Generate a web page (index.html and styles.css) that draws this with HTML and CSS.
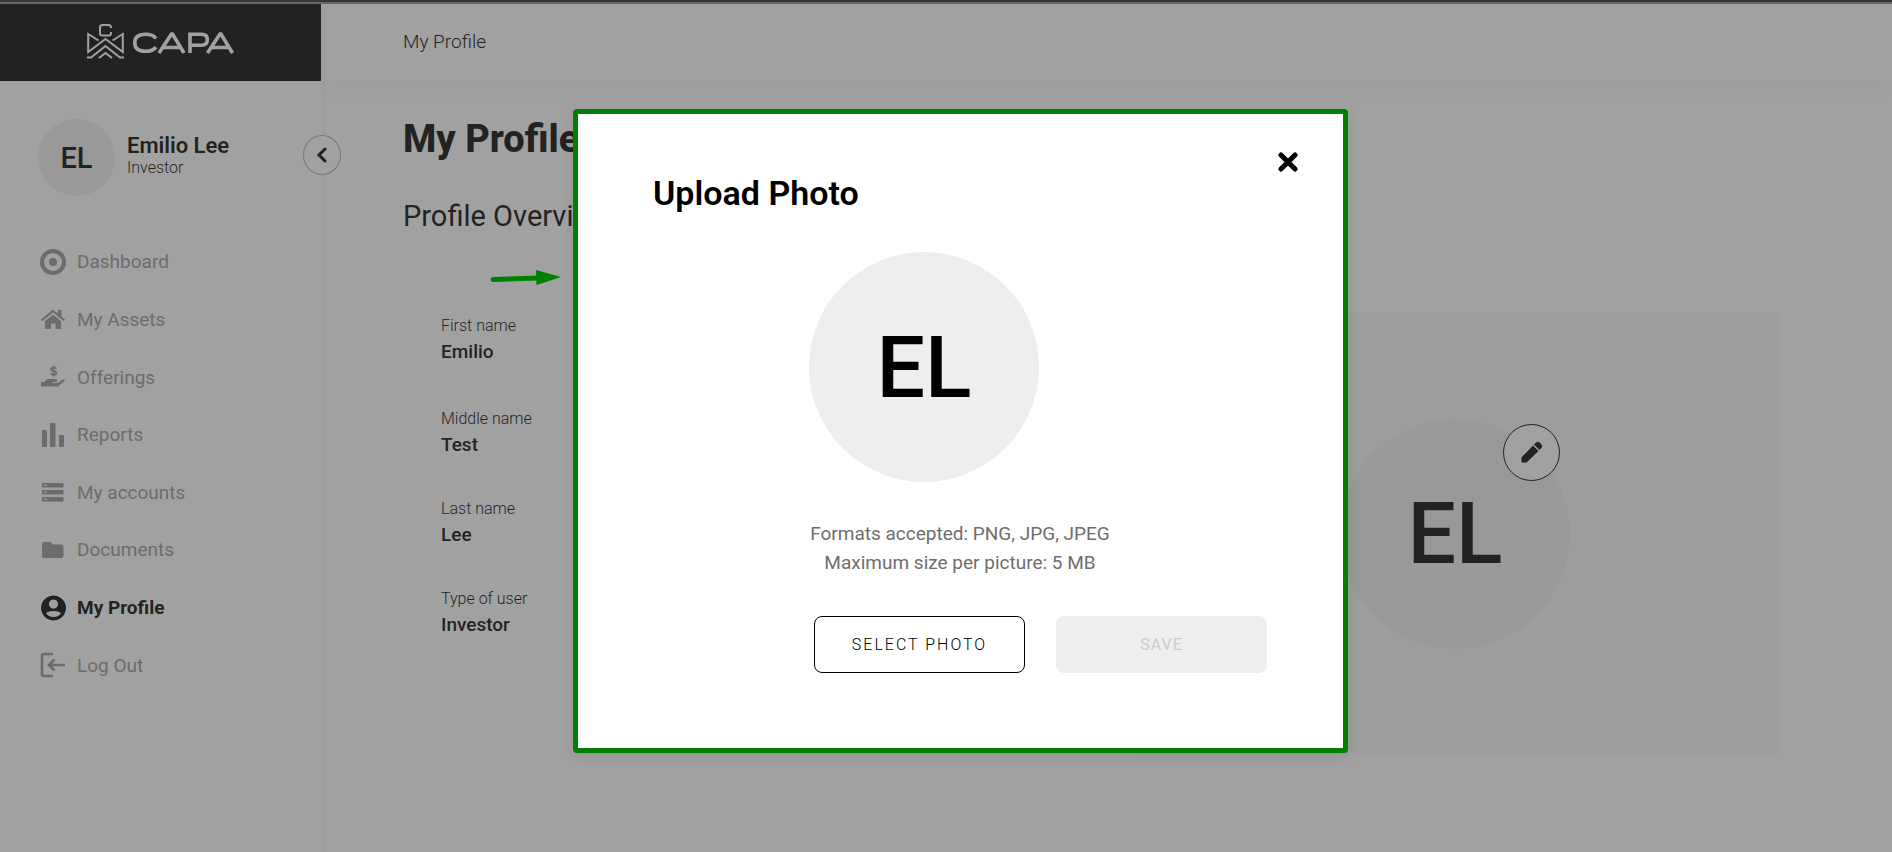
FILE: index.html
```
<!DOCTYPE html>
<html lang="en">
<head>
<meta charset="utf-8">
<title>My Profile</title>
<link rel="stylesheet" href="styles.css">
</head>
<body>
<div class="app">
  <aside class="sidebar">
    <div class="brand">
      <svg class="logo" viewBox="0 0 148 36" width="148" height="36" role="img" aria-label="CAPA">
        <g fill="none" stroke="#fff" stroke-width="2">
          <path d="M24 4V3.500Q24 1 21.500 1H15.500Q13 1 13 3.500V9Q13 11.500 15.500 11.500H21.500Q24 11.500 24 9V8"/>
          <path d="M11.500 16.500L1.200 10V28L18.500 15L35.800 28V10L25.500 16.500"/>
          <path d="M0 33.500H4L18.500 22L33 33.500H37"/>
          <path d="M12 34L18.500 29L25 34"/>
        </g>
        <g fill="none" stroke="#fff" stroke-width="3.600">
          <path d="M69 14.500Q66 10.300 58.500 10.300C51.500 10.300 47.800 13.500 47.800 18.800S51.500 27.300 58.500 27.300Q66 27.300 69 23.100"/>
          <path d="M72 29L84.500 10H85.500L97 29M76.500 23.500H93"/>
          <path d="M103 29V10.300H114.500Q120.300 10.300 120.300 15.800T114.500 21.300H103"/>
          <path d="M120.500 29L133 10H134L145.500 29M125 23.500H141.500"/>
        </g>
      </svg>
    </div>
    <div class="user">
      <div class="avatar avatar-small">EL</div>
      <div class="user-text">
        <div class="user-name">Emilio Lee</div>
        <div class="user-role">Investor</div>
      </div>
      <button class="collapse" aria-label="Collapse menu">
        <svg viewBox="0 0 14 18" width="14" height="18"><path d="M10 3L4 9l6 6" fill="none" stroke="#000" stroke-width="3" stroke-linecap="round"/></svg>
      </button>
    </div>
    <nav class="nav">
      <a class="nav-item" href="#"><svg class="icon" viewBox="0 0 26 26"><circle cx="13" cy="13" r="11" fill="none" stroke="currentColor" stroke-width="4"/><circle cx="13" cy="13" r="4"/></svg>Dashboard</a>
      <a class="nav-item" href="#"><svg class="icon" viewBox="0 0 26 26"><path d="M13 8.500L21 15V23H15.500V17.500H11V23H5V15Z"/><path d="M1.500 14.500L13 5L24.500 14.500" fill="none" stroke="currentColor" stroke-width="2.200"/><path d="M18 4H21.500V11L18 8Z"/></svg>My Assets</a>
      <a class="nav-item" href="#"><svg class="icon" viewBox="0 0 26 26"><path d="M1 18H4L7.500 15H16Q17.500 15 17.500 16.500T16 18H12.500V19H18L23 15.200Q25.500 15 24.500 17L18 22.500H1Z"/><path d="M16.500 4.500Q15.500 3.500 13.500 3.500Q11 3.500 11 5.300Q11 6.700 13.700 7T16.400 9Q16.400 10.700 13.700 10.700Q11.500 10.700 10.500 9.500M13.600 1.500V12.500" fill="none" stroke="currentColor" stroke-width="1.700"/></svg>Offerings</a>
      <a class="nav-item" href="#"><svg class="icon" viewBox="0 0 26 26"><rect x="2" y="8" width="5" height="17" rx="1"/><rect x="10" y="1" width="5.500" height="24" rx="1"/><rect x="19" y="13" width="5" height="12" rx="1"/></svg>Reports</a>
      <a class="nav-item" href="#"><svg class="icon" viewBox="0 0 26 26"><path fill-rule="evenodd" d="M2 4H23.500V8.500H2ZM4.500 5.500V7H6.500V5.500ZM2 11H23.500V15.500H2ZM4.500 12.500V14H6.500V12.500ZM2 18H23.500V22.500H2ZM4.500 19.500V21H6.500V19.500Z"/></svg>My accounts</a>
      <a class="nav-item" href="#"><svg class="icon" viewBox="0 0 26 26"><path d="M4 5H10.500L13 7.500H21.500Q23.500 7.500 23.500 9.500V19Q23.500 21 21.500 21H4Q2 21 2 19V7Q2 5 4 5Z"/></svg>Documents</a>
      <a class="nav-item nav-item-active" href="#" aria-current="page"><svg class="icon" viewBox="0 0 26 26"><path fill-rule="evenodd" d="M13.500 .5a12.500 12.500 0 1 0 .01 0ZM13.500 4.500a4.500 4.500 0 1 1-.01 0ZM13.500 22Q9 22 6 18.500Q7.500 16 13.500 16T21 18.500Q18 22 13.500 22Z"/></svg>My Profile</a>
      <a class="nav-item" href="#"><svg class="icon" viewBox="0 0 26 26"><path d="M13 2H4Q2 2 2 4V22Q2 24 4 24H13M25 13H9M14.500 7.500L9 13L14.500 18.500" fill="none" stroke="currentColor" stroke-width="2.700"/></svg>Log Out</a>
    </nav>
  </aside>
  <div class="content">
    <header class="topbar">My Profile</header>
    <main class="page">
      <h1 class="page-title">My Profile</h1>
      <h2 class="section-title">Profile Overview</h2>
      <div class="overview">
        <dl class="fields">
          <div class="field"><dt>First name</dt><dd>Emilio</dd></div>
          <div class="field"><dt>Middle name</dt><dd>Test</dd></div>
          <div class="field"><dt>Last name</dt><dd>Lee</dd></div>
          <div class="field"><dt>Type of user</dt><dd>Investor</dd></div>
        </dl>
        <section class="photo-panel">
          <div class="photo">
            <div class="avatar avatar-large">EL</div>
            <button class="edit" aria-label="Edit photo">
              <svg viewBox="0 0 22 22" width="22" height="22"><path d="M.5 21.500V16.500L12 4.500L17.500 10L5.500 21.500ZM13 3.500L15.500 1.300Q17 .3 18.300 1.300L20.700 3.700Q21.700 5 20.700 6.500L18.500 9Z"/></svg>
            </button>
          </div>
        </section>
      </div>
    </main>
  </div>
</div>
<div class="backdrop">
  <svg class="pointer" viewBox="0 0 72 18" width="72" height="18" aria-hidden="true"><path d="M3 10.500L48 9" stroke="#008000" stroke-width="5" stroke-linecap="round"/><path d="M46 1L71 8L46.500 16Z" fill="#008000"/></svg>
  <div class="modal" role="dialog" aria-modal="true" aria-labelledby="modal-title">
    <button class="close" aria-label="Close">
      <svg viewBox="0 0 20 20" width="20" height="20"><path d="M3 3L17 17M17 3L3 17" stroke="#000" stroke-width="5" stroke-linecap="round"/></svg>
    </button>
    <h2 class="modal-title" id="modal-title">Upload Photo</h2>
    <div class="modal-body">
      <div class="avatar avatar-large">EL</div>
      <p class="hint">Formats accepted: PNG, JPG, JPEG<br>Maximum size per picture: 5 MB</p>
      <div class="actions">
        <button class="button">SELECT PHOTO</button>
        <button class="button button-disabled" disabled>SAVE</button>
      </div>
    </div>
  </div>
</div>
<div class="window-edge"></div>
</body>
</html>
```

FILE: styles.css
```
* { box-sizing: border-box; }
body {
  margin: 0;
  font-family: Roboto, "Liberation Sans", sans-serif;
  color: #000;
  background: #fff;
}
button { font: inherit; color: inherit; padding: 0; cursor: pointer; }
.app {
  display: flex;
  min-height: 100vh;
  padding-top: 4px;
}
.window-edge {
  position: absolute;
  top: 0;
  left: 0;
  right: 0;
  z-index: 3;
  height: 4px;
  background: #35353d;
  border-bottom: 2px solid #66666a;
}
.sidebar {
  position: relative;
  z-index: 1;
  flex: none;
  width: 326px;
  border-right: 4px solid #f6f6f6;
  background: #fff;
}
.brand {
  display: flex;
  align-items: center;
  justify-content: center;
  height: 77px;
  margin-right: 1px;
  padding-bottom: 2px;
  background: #000;
}
.user {
  position: relative;
  display: flex;
  align-items: center;
  gap: 12px;
  margin-top: 38px;
  padding-left: 38px;
}
.avatar {
  display: flex;
  align-items: center;
  justify-content: center;
  border-radius: 50%;
  background: #eee;
  font-weight: 500;
}
.avatar-small { width: 77px; height: 77px; font-size: 29px; }
.avatar-large { width: 230px; height: 230px; font-size: 86px; }
.user-text { padding-bottom: 6px; }
.user-name { font-size: 22px; line-height: 26px; font-weight: 600; }
.user-role { font-size: 16px; line-height: 18px; font-weight: 300; }
.collapse {
  position: absolute;
  right: -19px;
  top: 16px;
  display: flex;
  align-items: center;
  justify-content: center;
  width: 38px;
  height: 40px;
  border: 1px solid #aaa;
  border-radius: 50%;
  background: #fff;
}
.nav {
  display: grid;
  grid-auto-rows: 1fr;
  height: 461px;
  margin-top: 37px;
  padding-left: 40px;
}
.nav-item {
  display: flex;
  align-items: center;
  gap: 11px;
  font-size: 19px;
  color: #949494;
  text-decoration: none;
}
.icon { width: 26px; height: 26px; fill: currentColor; }
.nav-item-active { color: #000; font-weight: 700; }
.content { flex: 1; min-width: 0; }
.topbar {
  height: 77px;
  padding-left: 77px;
  line-height: 75px;
  font-size: 19px;
  font-weight: 300;
  box-shadow: 0 10px 18px #f6f6f6;
}
.page { padding: 34px 112px 0 77px; }
.page-title { margin: 0; font-size: 38px; line-height: 48px; font-weight: 800; }
.section-title { margin: 36px 0 0; font-size: 29px; line-height: 34px; font-weight: 400; }
.overview { display: flex; margin-top: 80px; }
.fields { flex: 1; margin: 0; padding-left: 38px; display: flex; flex-direction: column; gap: 38px; }
.field:first-child { padding-bottom: 3px; }
.field dt { font-size: 16px; line-height: 26px; font-weight: 300; }
.field dd { margin: 0; font-size: 19px; line-height: 26px; font-weight: 500; }
.photo-panel {
  display: flex;
  align-items: center;
  justify-content: center;
  flex: none;
  width: 650px;
  height: 441px;
  background: #f6f6f6;
}
.photo { position: relative; }
.edit {
  position: absolute;
  top: 5px;
  right: 10px;
  display: flex;
  align-items: center;
  justify-content: center;
  width: 57px;
  height: 57px;
  border: 1px solid #000;
  border-radius: 50%;
  background: #fff;
}
.backdrop {
  position: absolute;
  inset: 0;
  z-index: 2;
  display: flex;
  justify-content: center;
  align-items: flex-start;
  padding: 109px 0 0 29px;
  background: rgba(68, 68, 68, 0.5);
}
.pointer { position: absolute; left: 490px; top: 269px; }
.modal {
  position: relative;
  width: 775px;
  padding: 59px 75px 75px;
  border: 5px solid #008000;
  border-radius: 4px;
  background: #fff;
  box-shadow: 0 4px 14px rgba(0, 0, 0, 0.08);
}
.close {
  position: absolute;
  top: 38px;
  right: 45px;
  display: flex;
  border: 0;
  background: none;
}
.modal-title { margin: 0; font-size: 34px; line-height: 40px; font-weight: 600; }
.modal-body { margin-top: 39px; padding-left: 156px; }
.hint { width: 302px; margin: 37px 0 0; font-size: 19px; line-height: 29px; text-align: center; color: #6e6e6e; }
.actions { display: flex; gap: 31px; margin: 39px 0 0 5px; }
.button {
  flex: 1;
  max-width: 211px;
  height: 57px;
  border: 1px solid #000;
  border-radius: 8px;
  background: #fff;
  font-size: 16px;
  font-weight: 300;
  letter-spacing: 2px;
}
.button-disabled { border-color: #eee; background: #eee; color: #ccc; font-weight: 400; letter-spacing: 1px; }
```
